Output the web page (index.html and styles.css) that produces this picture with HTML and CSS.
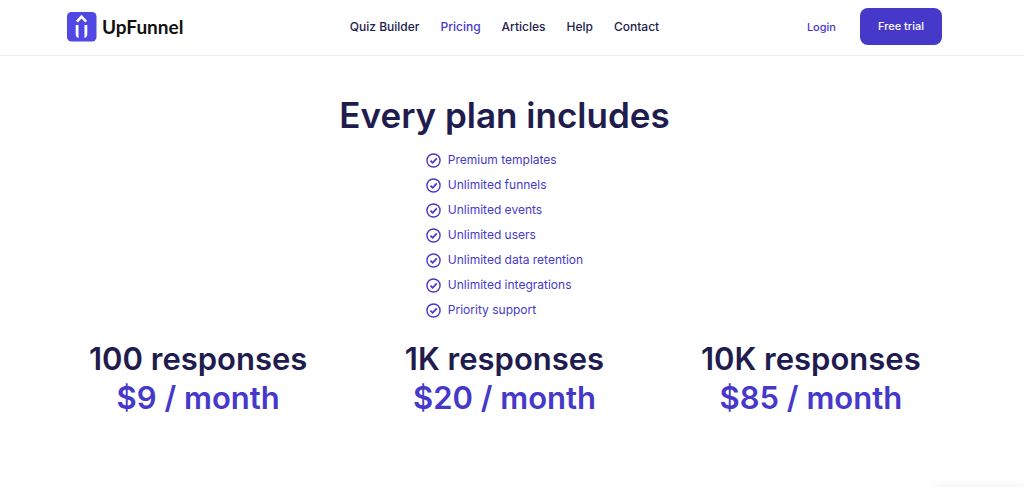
FILE: index.html
```html
<!DOCTYPE html>
<html lang="en">
<head>
    <meta charset="UTF-8">
    <meta name="viewport" content="width=device-width, initial-scale=1.0">
    <title>UpFunnel - Pricing</title>
    <link rel="stylesheet" href="styles.css">
</head>
<body>

    <header class="header">
        <a class="logo" href="#">
            <svg class="logo-icon" viewBox="0 0 30 30" aria-hidden="true">
                <rect width="29.5" height="29.5" rx="4.5" fill="#5048e5"/>
                <path d="M9.9 9.6 L14.5 4.6 L19.1 9.6" fill="none" stroke="#fff" stroke-width="2.6"/>
                <path d="M8.7 13 h2.8 v13 q-2.8 -.8 -2.8 -4 z M17.5 13 h2.8 v9 q0 3.2 -2.8 4 z" fill="#fff"/>
            </svg>
            <span>UpFunnel</span>
        </a>
        <nav class="nav">
            <a href="#">Quiz Builder</a>
            <a class="active" href="#">Pricing</a>
            <a href="#">Articles</a>
            <a href="#">Help</a>
            <a href="#">Contact</a>
        </nav>
        <div class="actions">
            <a class="login" href="#">Login</a>
            <button class="trial" type="button">Free trial</button>
        </div>
    </header>

    <!-- Check icon shared by the feature list -->
    <svg width="0" height="0" class="sprite" aria-hidden="true">
        <symbol id="check" viewBox="0 0 16 16">
            <circle cx="8" cy="8" r="7" fill="none" stroke="currentColor" stroke-width="1.5"/>
            <path d="M4.7 8.2 L7.1 10.5 L11.5 5.8" fill="none" stroke="currentColor" stroke-width="1.9"/>
        </symbol>
    </svg>

    <main class="pricing">
        <h1>Every plan includes</h1>
        <ul class="features">
            <li><svg class="check"><use href="#check"/></svg>Premium templates</li>
            <li><svg class="check"><use href="#check"/></svg>Unlimited funnels</li>
            <li><svg class="check"><use href="#check"/></svg>Unlimited events</li>
            <li><svg class="check"><use href="#check"/></svg>Unlimited users</li>
            <li><svg class="check"><use href="#check"/></svg>Unlimited data retention</li>
            <li><svg class="check"><use href="#check"/></svg>Unlimited integrations</li>
            <li><svg class="check"><use href="#check"/></svg>Priority support</li>
        </ul>
        <div class="plans">
            <h2>100 responses <span class="price">$9 / month</span></h2>
            <h2>1K responses <span class="price">$20 / month</span></h2>
            <h2>10K responses <span class="price">$85 / month</span></h2>
        </div>
    </main>

    <div class="widget"></div>

</body>
</html>
```
FILE: styles.css
```css
* {
    box-sizing: border-box;
}
body {
    margin: 0;
    font-family: Inter, sans-serif;
    color: #211c4e;
    background-color: #fff;
}
a {
    color: inherit;
    text-decoration: none;
}
.header {
    display: grid;
    grid-template-columns: 1fr auto 1fr;
    align-items: center;
    padding: 8px 82px 10px 67px;
    border-bottom: 1px solid #ececf0;
    font-size: 12px;
    font-weight: 500;
}
.logo {
    display: flex;
    align-items: center;
    gap: 5px;
    font-family: Lato, sans-serif;
    font-size: 19px;
    font-weight: 700;
    color: #111;
}
.logo-icon {
    width: 30px;
    height: 30px;
}
.nav {
    display: flex;
    gap: 21px;
}
.active,
.login {
    color: #4639ca;
}
.actions {
    display: flex;
    align-items: center;
    justify-content: flex-end;
    gap: 24px;
    font-size: 11px;
}
.trial {
    padding: 11px 18px;
    border: none;
    border-radius: 8px;
    background-color: #4639ca;
    color: #fff;
    font: inherit;
    line-height: 15px;
    cursor: pointer;
}
.sprite {
    position: absolute;
}
.pricing {
    display: flex;
    flex-direction: column;
    align-items: center;
    padding: 36px 60px 40px 45px;
}
h1 {
    margin: 0;
    font-size: 35px;
    font-weight: 600;
    line-height: 46px;
}
.features {
    display: grid;
    gap: 9px;
    margin: 14px 0 21px;
    padding: 0;
    list-style: none;
    font-size: 12px;
    line-height: 16px;
    color: #4639ca;
}
.features li {
    display: flex;
    align-items: center;
    gap: 7px;
}
.check {
    width: 15px;
    height: 15px;
}
.plans {
    display: grid;
    grid-template-columns: repeat(3, 1fr);
    width: 100%;
    text-align: center;
}
h2 {
    margin: 0;
    font-size: 31px;
    font-weight: 600;
    line-height: 39px;
}
.price {
    display: block;
    color: #4639ca;
}
.widget {
    position: fixed;
    right: 0;
    bottom: -10px;
    width: 90px;
    height: 10px;
    box-shadow: 0 0 12px rgba(0, 0, 0, 0.08);
}
```
